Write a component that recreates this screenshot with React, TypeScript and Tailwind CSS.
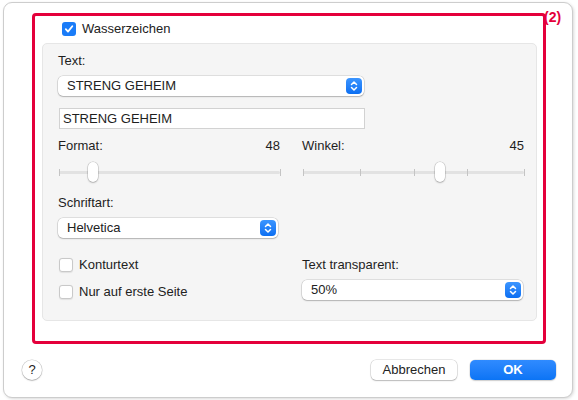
import React from 'react';

const font = { fontFamily: '"Liberation Sans", Arial, sans-serif' };

const Stepper: React.FC = () => (
  <span className="flex h-[16px] w-[16px] items-center justify-center rounded-[4px] bg-gradient-to-b from-[#3b95ff] to-[#0a6ff2]">
    <svg width="8" height="12" viewBox="0 0 8 12" fill="none">
      <path d="M1.5 4.5 L4 2 L6.5 4.5" stroke="white" strokeWidth="1.5" strokeLinecap="round" strokeLinejoin="round" />
      <path d="M1.5 7.5 L4 10 L6.5 7.5" stroke="white" strokeWidth="1.5" strokeLinecap="round" strokeLinejoin="round" />
    </svg>
  </span>
);

const Select: React.FC<{ value: string; className?: string }> = ({ value, className }) => (
  <div
    className={`flex h-[20px] items-center justify-between rounded-[5px] bg-white pl-[9px] pr-[2px] text-[13px] text-[#222] shadow-[0_0_0_0.5px_rgba(0,0,0,0.18),0_1px_1.5px_rgba(0,0,0,0.2)] ${className ?? ''}`}
  >
    <span>{value}</span>
    <Stepper />
  </div>
);

const Checkbox: React.FC<{ checked?: boolean; label: string }> = ({ checked, label }) => (
  <div className="flex h-[16px] items-center gap-[6px] text-[13px] text-[#222]">
    {checked ? (
      <span className="flex h-[14px] w-[14px] items-center justify-center rounded-[3px] bg-[#1a7cf8]">
        <svg width="10" height="10" viewBox="0 0 10 10" fill="none">
          <path d="M1.8 5.2 L4 7.6 L8.3 2.2" stroke="white" strokeWidth="1.8" strokeLinecap="round" strokeLinejoin="round" />
        </svg>
      </span>
    ) : (
      <span className="h-[14px] w-[14px] rounded-[3px] border border-[#c9c9c9] bg-white shadow-[0_0.5px_1px_rgba(0,0,0,0.08)]" />
    )}
    <span>{label}</span>
  </div>
);

const Slider: React.FC<{ ticks: number[]; value: number }> = ({ ticks, value }) => (
  <div className="relative mt-[8px] h-[20px] w-[221px] ml-[1px]">
    <div className="absolute left-0 right-0 top-[9px] h-[3px] rounded-full bg-[#e2e2e2]" />
    {ticks.map((t) => (
      <div
        key={t}
        className="absolute top-[7px] h-[7px] w-[1px] bg-[#c4c4c4]"
        style={{ left: `${t * 100}%` }}
      />
    ))}
    <div
      className="absolute top-0 h-[20px] w-[10px] -translate-x-1/2 rounded-full bg-white shadow-[0_0_0_0.5px_rgba(0,0,0,0.2),0_1px_2px_rgba(0,0,0,0.2)]"
      style={{ left: `${value * 100}%` }}
    />
  </div>
);

const App: React.FC = () => {
  return (
    <div className="h-[400px] w-[578px] overflow-hidden bg-white" style={font}>
      <div className="ml-[3px] mt-[2px] flex h-[396px] w-[570px] flex-col rounded-[9px] border border-[#cdcdcd] bg-white shadow-[1px_1px_3px_rgba(0,0,0,0.15)]">
        {/* highlighted area */}
        <div className="relative ml-[28px] mt-[10px] h-[331px] w-[514px] rounded-[4px] border-[3px] border-[#e4003b]">
          <span className="absolute left-full top-[-9px] ml-[1px] text-[14px] font-bold text-[#e4003b]">(2)</span>

          <div className="ml-[27px] mt-[5px]">
            <Checkbox checked label="Wasserzeichen" />
          </div>

          <div className="ml-[7px] mt-[6px] h-[278px] w-[495px] rounded-[5px] border border-[#e6e6e6] bg-[#f5f5f5] pl-[15px] pr-[12px] pt-[9px] text-[13px] text-[#1e1e1e]">
            <div className="h-[16px] leading-[16px]">Text:</div>
            <Select value="STRENG GEHEIM" className="mt-[7px] w-[306px]" />
            <div className="ml-[1px] mt-[12px] flex h-[21px] w-[306px] items-center border border-[#d2d2d2] bg-white pl-[3px]">
              STRENG GEHEIM
            </div>

            <div className="mt-[9px] grid grid-cols-2 gap-x-[22px]">
              <div>
                <div className="flex h-[16px] items-center justify-between leading-[16px]">
                  <span>Format:</span>
                  <span>48</span>
                </div>
                <Slider ticks={[0, 1]} value={0.155} />
              </div>
              <div>
                <div className="flex h-[16px] items-center justify-between leading-[16px]">
                  <span>Winkel:</span>
                  <span>45</span>
                </div>
                <Slider ticks={[0, 0.26, 0.5, 0.74, 1]} value={0.62} />
              </div>
            </div>

            <div className="mt-[13px] h-[16px] leading-[16px]">Schriftart:</div>
            <Select value="Helvetica" className="mt-[7px] w-[220px]" />

            <div className="mt-[19px] grid grid-cols-2 gap-x-[22px]">
              <div className="ml-[1px] flex flex-col gap-[11px]">
                <Checkbox label="Konturtext" />
                <Checkbox label="Nur auf erste Seite" />
              </div>
              <div>
                <div className="h-[16px] leading-[16px]">Text transparent:</div>
                <Select value="50%" className="mt-[7px] w-[221px]" />
              </div>
            </div>
          </div>
        </div>

        {/* bottom bar */}
        <div className="mt-[16px] flex items-center pl-[18px] pr-[16px]">
          <div className="flex h-[20px] w-[20px] items-center justify-center rounded-full bg-white text-[13px] text-[#222] shadow-[0_0_0_0.5px_rgba(0,0,0,0.2),0_1px_1.5px_rgba(0,0,0,0.2)]">
            ?
          </div>
          <div className="ml-auto flex gap-[13px]">
            <button className="h-[20px] w-[86px] rounded-[5px] bg-white text-[13px] text-[#222] shadow-[0_0_0_0.5px_rgba(0,0,0,0.18),0_1px_1.5px_rgba(0,0,0,0.2)]">
              Abbrechen
            </button>
            <button className="h-[20px] w-[86px] rounded-[5px] bg-gradient-to-b from-[#2f8bff] to-[#0a74f5] text-[13px] font-semibold text-white shadow-[0_0_0_0.5px_rgba(0,0,0,0.12),0_1px_1.5px_rgba(0,0,0,0.15)]">
              OK
            </button>
          </div>
        </div>
      </div>
    </div>
  );
};

export default App;
